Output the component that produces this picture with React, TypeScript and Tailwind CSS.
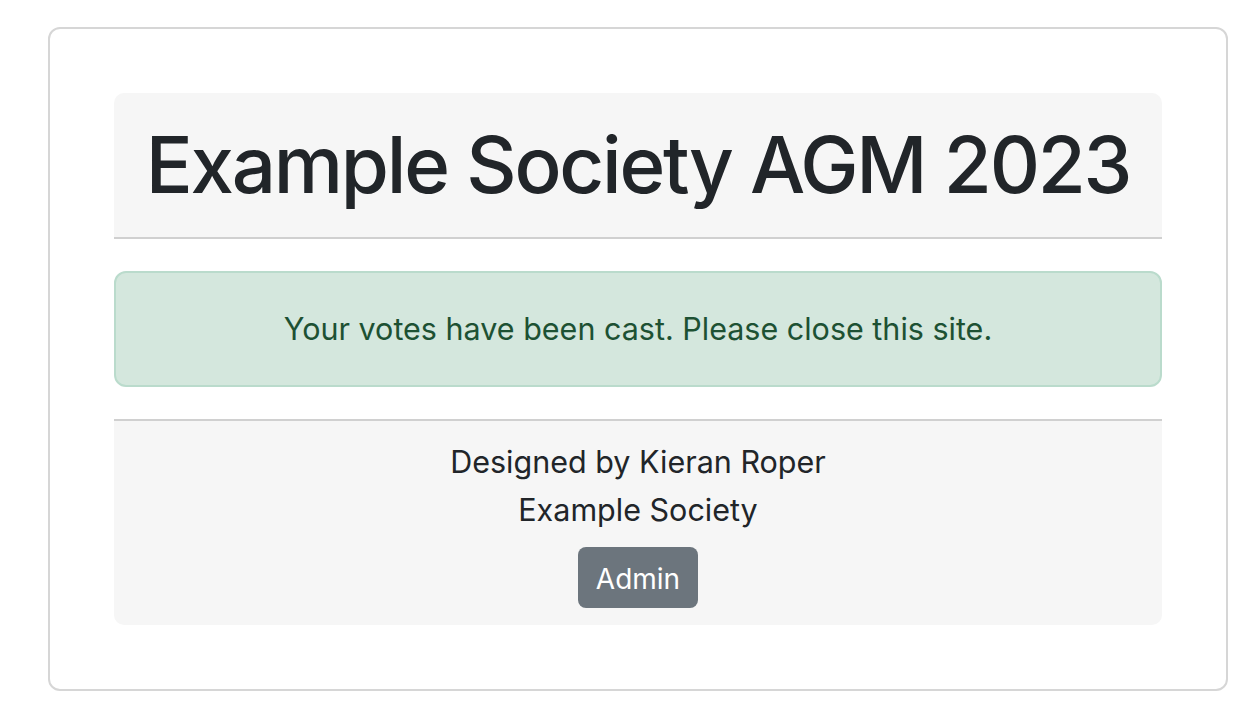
import React from 'react';

const App: React.FC = () => {
  return (
    <div className="min-h-screen bg-white pt-[27px] pl-[48px] font-['Inter',sans-serif] text-[#212529]">
      <div className="w-[1180px] rounded-[12px] border-2 border-[#d6d6d6] p-[64px]">
        {/* Header */}
        <div className="rounded-t-[10px] border-b-2 border-[#d0d0d0] bg-[#f6f6f6] py-[24px] text-center">
          <h1 className="whitespace-nowrap text-[78px] leading-[96px] font-medium tracking-[-2.25px]">Example Society AGM 2023</h1>
        </div>

        {/* Alert */}
        <div className="mt-[32px] rounded-[12px] border-2 border-[#badbcc] bg-[#d4e7dd] py-[32px] text-center text-[30.5px] leading-[48px] text-[#1d5133]">
          Your votes have been cast. Please close this site.
        </div>

        {/* Footer */}
        <div className="mt-[32px] flex flex-col items-center rounded-b-[10px] border-t-2 border-[#d0d0d0] bg-[#f6f6f6] pt-[17px] pb-[17px] text-[30.5px] leading-[48px]">
          <p>Designed by Kieran Roper</p>
          <p>Example Society</p>
          <button className="mt-[13px] rounded-[8px] bg-[#6c757d] px-[18px] pt-[8px] pb-[5px] text-[28px] leading-[48px] text-white">
            Admin
          </button>
        </div>
      </div>
    </div>
  );
};

export default App;
